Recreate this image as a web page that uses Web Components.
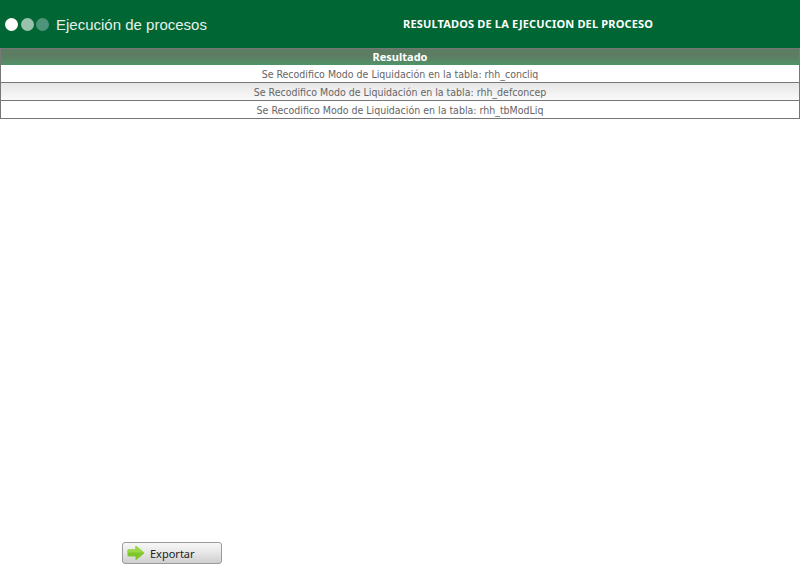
<!DOCTYPE html>
<html>
<head>
<meta charset="utf-8">
<title>Ejecución de procesos</title>
<style>
    html, body { margin: 0; padding: 0; height: 100%; background: #fff; }
    body { display: flex; flex-direction: column; height: 579px; overflow: hidden; font-family: "DejaVu Sans Condensed", "Noto Sans", sans-serif; }
</style>
</head>
<body>
<app-header heading="Ejecución de procesos" subtitle="RESULTADOS DE LA EJECUCION DEL PROCESO"></app-header>
<result-table heading="Resultado">
    <result-row>Se Recodifico Modo de Liquidación en la tabla: rhh_concliq</result-row>
    <result-row alt>Se Recodifico Modo de Liquidación en la tabla: rhh_defconcep</result-row>
    <result-row>Se Recodifico Modo de Liquidación en la tabla: rhh_tbModLiq</result-row>
</result-table>
<page-footer><export-button>Exportar</export-button></page-footer>

<script>
class AppHeader extends HTMLElement {
    constructor() {
        super();
        const shadow = this.attachShadow({ mode: 'open' })
        shadow.innerHTML = `
            <style>
                :host {
                    display: flex;
                    align-items: center;
                    height: 48px;
                    background: #006633;
                    color: #fff;
                    flex: none;
                }
                .left {
                    display: flex;
                    align-items: center;
                    gap: 2.5px;
                    width: 403px;
                    padding: 1px 0 0 5px;
                    box-sizing: border-box;
                }
                .dot { width: 13px; height: 13px; border-radius: 50%; }
                .d1 { background: #fff; }
                .d2 { background: #99c2ad; }
                .d3 { background: #4d947a; }
                h1 {
                    margin: 0 0 0 4.5px;
                    font: 400 15px "Liberation Sans", Arial, sans-serif;
                    color: #e6f0eb;
                }
                h2 {
                    margin: -2px 0 0;
                    font: 700 11px "Noto Sans", sans-serif;
                    letter-spacing: .16px;
                    white-space: nowrap;
                }
            </style>
            <div class="left">
                <span class="dot d1"></span><span class="dot d2"></span><span class="dot d3"></span>
                <h1></h1>
            </div>
            <h2></h2>
        `
        shadow.querySelector('h1').textContent = this.getAttribute('heading')
        shadow.querySelector('h2').textContent = this.getAttribute('subtitle')
    }
}

class ResultTable extends HTMLElement {
    constructor() {
        super();
        const shadow = this.attachShadow({ mode: 'open' })
        shadow.innerHTML = `
            <style>
                :host { display: block; flex: none; }
                .head {
                    height: 17px;
                    text-align: center;
                    box-sizing: border-box;
                    border: 1px solid #777;
                    border-width: 1px 1px 0;
                    background: linear-gradient(#5d7d62 0, #5d7d62 45%, #4f9468 100%);
                    color: #fff;
                    font: 700 11px/15px "Noto Sans", sans-serif;
                }
            </style>
            <div class="head"></div>
            <slot></slot>
        `
        shadow.querySelector('.head').textContent = this.getAttribute('heading')
    }
}

class ResultRow extends HTMLElement {
    constructor() {
        super();
        const shadow = this.attachShadow({ mode: 'open' })
        shadow.innerHTML = `
            <style>
                :host {
                    display: block;
                    box-sizing: border-box;
                    height: 18px;
                    border: 1px solid #777;
                    border-top: 0;
                    text-align: center;
                    color: #666;
                    font: 400 10.5px/19px "DejaVu Sans Condensed", "Noto Sans", sans-serif;
                    font-stretch: condensed;
                    background: #fff;
                }
                :host([alt]) { background: linear-gradient(#e6e6e6, #fafafa); }
            </style>
            <slot></slot>
        `
    }
}

class PageFooter extends HTMLElement {
    constructor() {
        super();
        const shadow = this.attachShadow({ mode: 'open' })
        shadow.innerHTML = `
            <style>
                :host {
                    display: flex;
                    margin-top: auto;
                    padding: 0 0 15px 122px;
                }
            </style>
            <slot></slot>
        `
    }
}

class ExportButton extends HTMLElement {
    constructor() {
        super();
        const shadow = this.attachShadow({ mode: 'open' })
        shadow.innerHTML = `
            <style>
                :host {
                    display: flex;
                    align-items: center;
                    box-sizing: border-box;
                    width: 100px;
                    height: 22px;
                    padding-left: 4px;
                    gap: 5px;
                    border: 1px solid #9a9a9a;
                    border-radius: 3px;
                    background: linear-gradient(#f7f7f7 0, #e8e8e8 45%, #cfcfcf 100%);
                    color: #222;
                    font: 400 11px "Noto Sans", sans-serif;
                    cursor: pointer;
                }
                svg { width: 18px; height: 16px; flex: none; }
            </style>
            <svg viewBox="0 0 18 16">
                <path d="M1 4.500h7.500V1.500a.5.500 0 0 1 .8-.4l7.700 6.500a.6.600 0 0 1 0 .8l-7.700 6.500a.5.500 0 0 1-.8-.4v-3H1a.5.500 0 0 1-.5-.5v-5.500a.5.500 0 0 1 .5-.5z" fill="#7ec62a"/>
                <path d="M1 4.500h7.500V1.500a.5.500 0 0 1 .8-.4l7.700 6.500H.5v-2.600a.5.500 0 0 1 .5-.5z" fill="#9ad845"/>
            </svg>
            <slot></slot>
        `
    }
}

customElements.define('app-header', AppHeader)
customElements.define('result-table', ResultTable)
customElements.define('result-row', ResultRow)
customElements.define('page-footer', PageFooter)
customElements.define('export-button', ExportButton)
</script>
</body>
</html>
